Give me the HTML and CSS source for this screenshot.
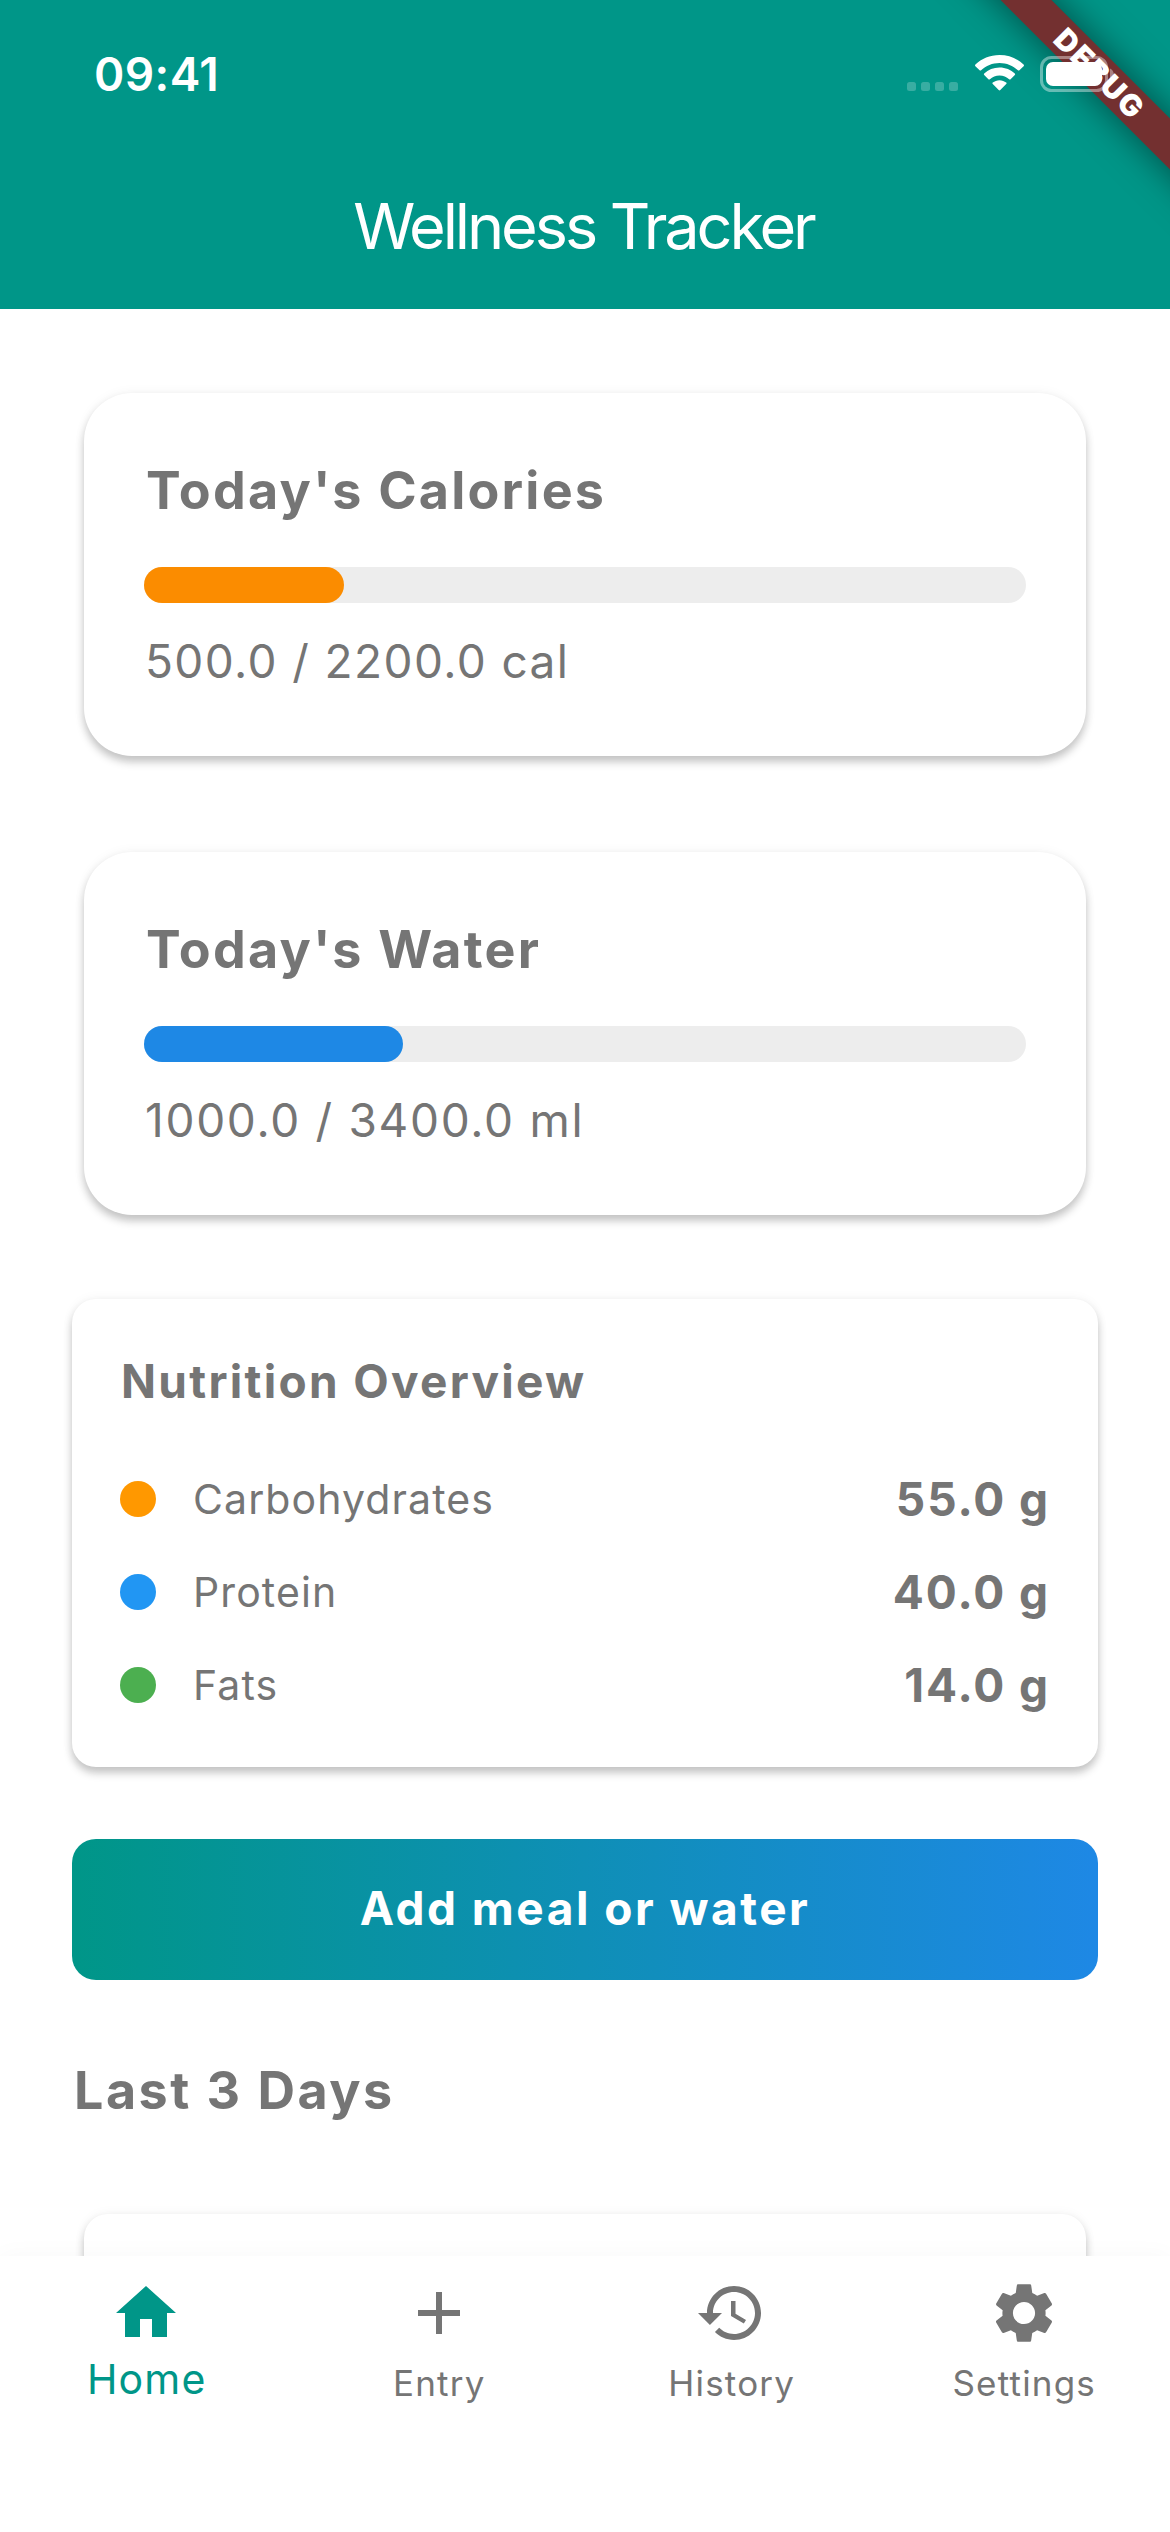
FILE: index.html
```html
<!DOCTYPE html>
<html lang="en">
<head>
<meta charset="utf-8">
<title>Wellness Tracker</title>
<link rel="stylesheet" href="styles.css">
</head>
<body>
<div class="app">
  <header class="appbar">
    <div class="debug"><span class="debug-band">DEBUG</span></div>
    <div class="status">
      <span class="clock">09:41</span>
      <span class="status-icons">
        <svg class="cell" viewBox="0 0 51 9"><g fill="#fff" fill-opacity=".22"><rect width="9" height="9" rx="2.5"/><rect x="14" width="9" height="9" rx="2.5"/><rect x="28" width="9" height="9" rx="2.5"/><rect x="42" width="9" height="9" rx="2.5"/></g></svg>
        <svg class="wifi" viewBox="0 0 49 36" fill="#fff"><path d="M24.500 0C15 0 6.500 3.600.4 9.600c-.5.500-.5 1.100 0 1.600l4.200 4.100c.4.400 1 .4 1.500 0C11 10.800 17.400 8 24.500 8s13.500 2.800 18.400 7.300c.5.400 1.100.4 1.500 0l4.200-4.100c.5-.5.5-1.100 0-1.600C42.500 3.600 34 0 24.500 0z"/><path d="M24.500 12.500c-6 0-11.300 2.300-15.300 6-.5.500-.5 1.100 0 1.600l4.200 4.200c.4.400 1 .4 1.500 0 2.500-2.300 5.900-3.700 9.600-3.700s7.100 1.400 9.600 3.700c.5.400 1.100.4 1.500 0l4.200-4.200c.5-.5.5-1.100 0-1.600-4-3.700-9.300-6-15.300-6z"/><path d="M24.500 25.200c-2.600 0-4.900.9-6.700 2.400-.5.400-.5 1.100 0 1.500l5.900 6c.5.500 1.100.5 1.600 0l5.900-6c.5-.4.5-1.100 0-1.500-1.800-1.500-4.100-2.400-6.700-2.400z"/></svg>
        <svg class="battery" viewBox="0 0 74 36"><rect x="1.500" y="1.500" width="65" height="33" rx="10" fill="none" stroke="#fff" stroke-opacity=".4" stroke-width="3"/><rect x="6" y="6" width="56" height="24" rx="7" fill="#fff"/><path d="M70 12.500c2.300 1 3.700 3 3.700 5.500s-1.400 4.500-3.700 5.500z" fill="#fff" fill-opacity=".4"/></svg>
      </span>
    </div>
    <h1 class="title">Wellness Tracker</h1>
  </header>

  <main class="content">
    <section class="card goal">
      <h2 class="goal-title">Today's Calories</h2>
      <div class="track"><div class="fill calories" style="width:22.727%"></div></div>
      <p class="goal-value">500.0 / 2200.0 cal</p>
    </section>

    <section class="card goal">
      <h2 class="goal-title">Today's Water</h2>
      <div class="track"><div class="fill water" style="width:29.412%"></div></div>
      <p class="goal-value water-value">1000.0 / 3400.0 ml</p>
    </section>

    <section class="card nutrition">
      <h2 class="nutrition-title">Nutrition Overview</h2>
      <div class="row"><span class="dot carbs"></span><span class="name">Carbohydrates</span><span class="amount">55.0 g</span></div>
      <div class="row"><span class="dot protein"></span><span class="name">Protein</span><span class="amount">40.0 g</span></div>
      <div class="row"><span class="dot fats"></span><span class="name">Fats</span><span class="amount">14.0 g</span></div>
    </section>

    <button class="add">Add meal or water</button>
    <h2 class="section-title">Last 3 Days</h2>
    <section class="card day"></section>
  </main>

  <nav class="nav">
    <a class="tab active"><svg viewBox="0 0 24 24"><path d="M10 20v-6h4v6h5v-8h3L12 3 2 12h3v8z"/></svg><span>Home</span></a>
    <a class="tab"><svg viewBox="0 0 24 24"><path d="M19 13h-6v6h-2v-6H5v-2h6V5h2v6h6v2z"/></svg><span>Entry</span></a>
    <a class="tab"><svg viewBox="0 0 24 24"><path d="M13 3c-4.970 0-9 4.030-9 9H1l3.890 3.890.07.14L9 12H6c0-3.870 3.130-7 7-7s7 3.130 7 7-3.130 7-7 7c-1.930 0-3.680-.79-4.940-2.060l-1.420 1.420C8.270 19.990 10.510 21 13 21c4.970 0 9-4.030 9-9s-4.030-9-9-9zm-1 5v5l4.280 2.540.72-1.210-3.500-2.080V8H12z"/></svg><span>History</span></a>
    <a class="tab"><svg viewBox="0 0 24 24"><path d="M19.140 12.940c.04-.3.06-.61.06-.94 0-.32-.02-.64-.07-.94l2.030-1.580c.18-.14.23-.41.12-.61l-1.920-3.320c-.12-.22-.37-.29-.59-.22l-2.390.96c-.5-.38-1.030-.7-1.620-.94l-.36-2.540c-.04-.24-.24-.41-.48-.41h-3.840c-.24 0-.43.17-.47.41l-.36 2.540c-.59.24-1.130.57-1.620.94l-2.390-.96c-.22-.08-.47 0-.59.22L2.740 8.870c-.12.21-.08.47.12.61l2.030 1.580c-.05.3-.09.63-.09.94s.02.64.07.94l-2.030 1.580c-.18.14-.23.41-.12.61l1.920 3.320c.12.22.37.29.59.22l2.390-.96c.5.38 1.030.7 1.620.94l.36 2.540c.05.24.24.41.48.41h3.840c.24 0 .44-.17.47-.41l.36-2.540c.59-.24 1.130-.56 1.620-.94l2.390.96c.22.08.47 0 .59-.22l1.920-3.320c.12-.22.07-.47-.12-.61l-2.010-1.580zM12 15.700c-2.040 0-3.700-1.660-3.700-3.700s1.660-3.700 3.700-3.700 3.700 1.660 3.700 3.700-1.660 3.700-3.700 3.700z"/></svg><span>Settings</span></a>
  </nav>
</div>
</body>
</html>
```
FILE: styles.css
```css
* { box-sizing: border-box; margin: 0; padding: 0; }

body {
  font-family: Inter, "Liberation Sans", sans-serif;
  color: #757575;
  background: #fff;
}

.app {
  width: 1170px;
  height: 2532px;
  display: flex;
  flex-direction: column;
  overflow: hidden;
}

/* App bar */
.appbar {
  position: relative;
  flex: none;
  height: 309px;
  background: #009688;
  color: #fff;
}
.status {
  position: relative;
  display: flex;
  justify-content: space-between;
  align-items: flex-start;
  height: 141px;
  padding: 46px 56px 0 94px;
}
.clock { font-size: 46px; line-height: 56px; font-weight: 600; letter-spacing: .4px; }
.status-icons { display: flex; align-items: flex-start; padding-top: 9px; }
.cell { width: 51px; height: 9px; margin: 27px 17px 0 0; }
.wifi { width: 49px; height: 36px; margin-right: 16px; }
.battery { width: 74px; height: 36px; margin-top: 1px; }
.title {
  text-align: center;
  font-size: 63px;
  line-height: 78px;
  font-weight: 400;
  letter-spacing: -3.1px;
  padding: 46px 3px 0 0;
}

/* Corner ribbon */
.debug { position: absolute; inset: 0; overflow: hidden; }
.debug-band {
  position: absolute;
  left: 898px;
  top: 54px;
  width: 400px;
  height: 36px;
  transform: rotate(45deg);
  background: #733030;
  box-shadow: 0 0 36px rgba(0, 0, 0, .5);
  font-size: 30px;
  line-height: 36px;
  font-weight: 900;
  letter-spacing: 1.9px;
  text-indent: 5px;
  text-align: center;
}

/* Scrolling content */
.content {
  flex: 1;
  min-height: 0;
  overflow: hidden;
  display: flex;
  flex-direction: column;
  padding: 84px 72px 0;
}
.content > * { flex: none; }
.card {
  background: #fff;
  border-radius: 24px;
  box-shadow: 0 6px 9px rgba(0, 0, 0, .22), 0 0 12px rgba(0, 0, 0, .05);
}
.goal {
  height: 363px;
  margin: 0 12px 96px;
  padding: 67px 60px 0;
  border-radius: 48px;
}
.goal-title { font-size: 52px; line-height: 62px; font-weight: 700; letter-spacing: 2.2px; padding-left: 2px; }
.track { height: 36px; margin-top: 45px; border-radius: 18px; background: #ededed; }
.fill { height: 36px; border-radius: 18px; }
.calories { background: #fb8c00; }
.water { background: #1e88e5; }
.goal-value { margin-top: 30px; padding-left: 1px; font-size: 46px; line-height: 56px; letter-spacing: 1.4px; }
.water-value { letter-spacing: 1.7px; }

.nutrition { height: 468px; margin-top: -12px; padding: 54px 48px 0; }
.nutrition-title { font-size: 46px; line-height: 56px; font-weight: 700; letter-spacing: 2.3px; padding-left: 1px; margin-bottom: 43px; }
.row { display: flex; align-items: center; height: 93px; }
.dot { width: 36px; height: 36px; border-radius: 50%; margin-right: 37px; }
.carbs { background: #ff9800; }
.protein { background: #2196f3; }
.fats { background: #4caf50; }
.name { font-size: 41px; line-height: 50px; letter-spacing: 1.1px; }
.amount { margin-left: auto; font-size: 46px; line-height: 56px; font-weight: 700; letter-spacing: 1.9px; }

.add {
  margin-top: 72px;
  height: 141px;
  padding-bottom: 3px;
  border: 0;
  border-radius: 24px;
  background: linear-gradient(90deg, #009688, #1e88e5);
  color: #fff;
  font: 700 46px/56px Inter, "Liberation Sans", sans-serif;
  letter-spacing: 2.5px;
}
.section-title { margin-top: 80px; padding-left: 2px; font-size: 52px; line-height: 62px; font-weight: 700; letter-spacing: 2.5px; }
.day { height: 300px; margin: 92px 12px 0; }

/* Bottom navigation */
.nav {
  position: relative;
  flex: none;
  height: 276px;
  display: grid;
  grid-template-columns: repeat(4, 1fr);
  background: #fff;
  box-shadow: 0 0 24px rgba(0, 0, 0, .03);
}
.tab { display: flex; flex-direction: column; align-items: center; padding-top: 21px; }
.tab svg { width: 72px; height: 72px; fill: currentColor; }
.tab span { margin-top: 12px; padding-left: 1px; font-size: 35px; line-height: 44px; letter-spacing: 1.2px; }
.tab.active { color: #009688; }
.tab.active span { margin-top: 5px; font-size: 41px; line-height: 50px; }
```
